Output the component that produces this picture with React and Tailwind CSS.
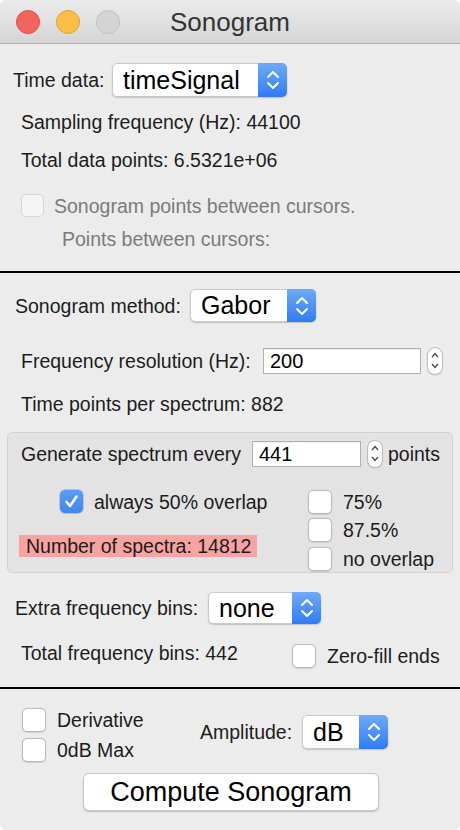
import React from "react";

const font = { fontFamily: '"Liberation Sans", Arial, sans-serif' };

function Check({ checked = false, disabled = false }) {
  if (checked) {
    return (
      <div className="flex h-[23px] w-[23px] shrink-0 items-center justify-center rounded-[5px] bg-linear-to-b from-[#5b9df5] to-[#3f86ee] shadow-[0_0_0_0.5px_rgba(40,90,200,0.5)]">
        <svg width="23" height="23" viewBox="0 0 23 23">
          <path d="M6.5 12 L10 16 L16.5 6.5" fill="none" stroke="#fff" strokeWidth="2.6" strokeLinecap="round" strokeLinejoin="round" />
        </svg>
      </div>
    );
  }
  return (
    <div
      className={
        disabled
          ? "h-[23px] w-[23px] shrink-0 rounded-[5px] border border-[#d6d6d6] bg-[#f5f5f5]"
          : "h-[24px] w-[24px] shrink-0 rounded-[5px] border border-[#b9b9b9] bg-white shadow-[0_0.5px_1px_rgba(0,0,0,0.12)]"
      }
    />
  );
}

function Popup({ text, className }) {
  return (
    <div className={"flex shrink-0 rounded-[5px] border border-[#c9c9c9] bg-white shadow-[0_1px_1.5px_rgba(0,0,0,0.18)] " + className}>
      <div className="flex flex-1 items-center pl-[10px] text-[25px] leading-none text-black">{text}</div>
      <div className="-my-px -mr-px flex w-[29px] items-center justify-center rounded-r-[5px] bg-linear-to-b from-[#6eaaf8] to-[#2e7bf5]">
        <svg width="12" height="20" viewBox="0 0 12 20">
          <path d="M1 7 L6 2 L11 7" fill="none" stroke="#fff" strokeWidth="2" strokeLinecap="round" strokeLinejoin="round" />
          <path d="M1 13 L6 18 L11 13" fill="none" stroke="#fff" strokeWidth="2" strokeLinecap="round" strokeLinejoin="round" />
        </svg>
      </div>
    </div>
  );
}

function Stepper() {
  return (
    <div className="h-[28px] w-[16px] shrink-0 rounded-full border border-[#bdbdbd] bg-white shadow-[0_0.5px_1px_rgba(0,0,0,0.15)]">
      <svg width="14" height="26" viewBox="0 0 14 26">
        <path d="M4 9 L7 5.5 L10 9" fill="none" stroke="#4a4a4a" strokeWidth="1.3" />
        <path d="M4 16 L7 19.5 L10 16" fill="none" stroke="#4a4a4a" strokeWidth="1.3" />
      </svg>
    </div>
  );
}

function Field({ value, className }) {
  return (
    <div className={"flex h-[26px] shrink-0 items-center border border-[#b0b0b0] bg-white pl-[6px] text-[20px] leading-none text-black shadow-[inset_0_1px_0_rgba(0,0,0,0.06)] " + className}>
      {value}
    </div>
  );
}

export default function App() {
  return (
    <div style={font} className="h-[830px] w-[460px] overflow-hidden rounded-[6px] bg-[#ececec] text-[19.5px] leading-[22px] text-[#1c1c1c]">
      {/* Title bar */}
      <div className="grid h-[44px] grid-cols-[1fr_auto_1fr] items-center border-b border-[#b3b3b3] bg-linear-to-b from-[#ebebeb] to-[#d5d5d5]">
        <div className="flex items-center gap-[16px] pl-[16px]">
          <div className="h-[24px] w-[24px] rounded-full border border-[#dc4e47] bg-[#f3645c]" />
          <div className="h-[24px] w-[24px] rounded-full border border-[#dea236] bg-[#f9bf47]" />
          <div className="h-[24px] w-[24px] rounded-full border border-[#c2c2c2] bg-[#d4d4d4]" />
        </div>
        <div className="text-[26px] leading-none text-[#333]">Sonogram</div>
        <div />
      </div>

      {/* Section 1 */}
      <div className="flex flex-col">
        <div className="mt-[19px] flex h-[34px] items-center pl-[13px]">
          <span className="w-[99px] shrink-0 whitespace-nowrap">Time data:</span>
          <Popup text="timeSignal" className="h-[34px] w-[175px]" />
        </div>
        <div className="mt-[14px] h-[22px] pl-[21px] whitespace-nowrap">Sampling frequency (Hz): 44100</div>
        <div className="mt-[16px] h-[22px] pl-[21px] whitespace-nowrap">Total data points: 6.5321e+06</div>
        <div className="mt-[23px] flex h-[23px] items-center pl-[21px]">
          <Check disabled />
          <span className="ml-[10px] whitespace-nowrap text-[#7b7b7b]">Sonogram points between cursors.</span>
        </div>
        <div className="mt-[11px] h-[22px] pl-[62px] whitespace-nowrap text-[#7b7b7b]">Points between cursors:</div>
        <div className="mt-[21px] h-[2px] bg-black" />
      </div>

      {/* Section 2 */}
      <div className="flex flex-col">
        <div className="mt-[16px] flex h-[33px] items-center pl-[15px]">
          <span className="w-[175px] shrink-0 whitespace-nowrap">Sonogram method:</span>
          <Popup text="Gabor" className="h-[33px] w-[126px]" />
        </div>
        <div className="mt-[25px] flex h-[28px] items-center pl-[21px]">
          <span className="w-[242px] shrink-0 whitespace-nowrap">Frequency resolution (Hz):</span>
          <Field value="200" className="w-[158px]" />
          <div className="ml-[6px]"><Stepper /></div>
        </div>
        <div className="mt-[18px] h-[22px] pl-[21px] whitespace-nowrap">Time points per spectrum: 882</div>

        <div className="mx-[7px] mt-[17px] h-[141px] rounded-[5px] border border-[#d3d3d3] bg-[#e3e3e3]">
          <div className="mt-[7px] flex h-[28px] items-center">
            <span className="w-[244px] shrink-0 whitespace-nowrap pl-[13px]">Generate spectrum every</span>
            <Field value="441" className="w-[109px]" />
            <div className="ml-[6px]"><Stepper /></div>
            <span className="ml-[5px] whitespace-nowrap">points</span>
          </div>
          <div className="mt-[22px] flex">
            <div className="flex w-[300px] shrink-0 flex-col">
              <div className="flex h-[23px] items-center pl-[52px]">
                <Check checked />
                <span className="ml-[11px] whitespace-nowrap">always 50% overlap</span>
              </div>
              <div className="ml-[11px] mt-[22px] flex h-[22px] w-[238px] items-center bg-[#f8a2a2] pl-[7px] whitespace-nowrap">
                Number of spectra: 14812
              </div>
            </div>
            <div className="flex flex-col">
              <div className="flex h-[23px] items-center">
                <Check />
                <span className="ml-[11px] whitespace-nowrap">75%</span>
              </div>
              <div className="mt-[5px] flex h-[23px] items-center">
                <Check />
                <span className="ml-[11px] whitespace-nowrap">87.5%</span>
              </div>
              <div className="mt-[6px] flex h-[23px] items-center">
                <Check />
                <span className="ml-[11px] whitespace-nowrap">no overlap</span>
              </div>
            </div>
          </div>
        </div>

        <div className="mt-[19px] flex h-[32px] items-center pl-[15px]">
          <span className="w-[193px] shrink-0 whitespace-nowrap">Extra frequency bins:</span>
          <Popup text="none" className="h-[32px] w-[113px]" />
        </div>
        <div className="mt-[20px] flex h-[23px] items-center pl-[21px]">
          <span className="w-[271px] shrink-0 whitespace-nowrap pb-[6px]">Total frequency bins: 442</span>
          <Check />
          <span className="ml-[11px] whitespace-nowrap">Zero-fill ends</span>
        </div>
        <div className="mt-[20px] h-[2px] bg-black" />
      </div>

      {/* Section 3 */}
      <div className="flex flex-col">
        <div className="mt-[19px] flex items-start pl-[22px]">
          <div className="flex w-[178px] shrink-0 flex-col">
            <div className="flex h-[24px] items-center">
              <Check />
              <span className="ml-[11px] whitespace-nowrap">Derivative</span>
            </div>
            <div className="mt-[6px] flex h-[24px] items-center">
              <Check />
              <span className="ml-[11px] whitespace-nowrap">0dB Max</span>
            </div>
          </div>
          <div className="mt-[7px] flex h-[34px] items-center">
            <span className="w-[102px] shrink-0 whitespace-nowrap">Amplitude:</span>
            <Popup text="dB" className="h-[34px] w-[86px]" />
          </div>
        </div>
        <div className="ml-[83px] mt-[11px] flex h-[38px] w-[296px] items-center justify-center rounded-[6px] border border-[#c8c8c8] bg-white text-[27px] leading-none text-black shadow-[0_1px_1.5px_rgba(0,0,0,0.2)]">
          Compute Sonogram
        </div>
      </div>
    </div>
  );
}
